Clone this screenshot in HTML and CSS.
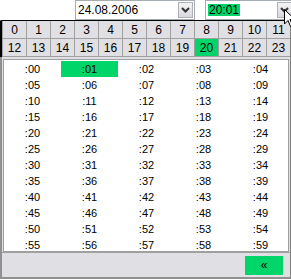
FILE: index.html
```html
<!DOCTYPE html>
<html lang="de">
<head>
    <meta charset="UTF-8">
    <title>Datum und Uhrzeit</title>
    <link rel="stylesheet" href="styles.css">
</head>
<body>
    <div class="top">
        <div class="field date-field">
            <span class="value">24.08.2006</span>
            <span class="drop"><svg width="9" height="6" viewBox="0 0 9 6"><path d="M1 1 L4.5 4.5 L8 1" fill="none" stroke="#333" stroke-width="2"/></svg></span>
        </div>
        <div class="field time-field">
            <span class="value"><span class="sel">20:01</span></span>
            <span class="drop"><svg width="9" height="6" viewBox="0 0 9 6"><path d="M1 1 L4.5 4.5 L8 1" fill="none" stroke="#333" stroke-width="2"/></svg></span>
        </div>
    </div>

    <div class="panel">
        <div class="hours">
            <div class="h">0</div><div class="h">1</div><div class="h">2</div><div class="h">3</div>
            <div class="h">4</div><div class="h">5</div><div class="h">6</div><div class="h">7</div>
            <div class="h">8</div><div class="h">9</div><div class="h">10</div><div class="h">11</div>
            <div class="h">12</div><div class="h">13</div><div class="h">14</div><div class="h">15</div>
            <div class="h">16</div><div class="h">17</div><div class="h">18</div><div class="h">19</div>
            <div class="h active">20</div><div class="h">21</div><div class="h">22</div><div class="h">23</div>
        </div>

        <div class="minutes">
            <div class="m">:00</div><div class="m active">:01</div><div class="m">:02</div><div class="m">:03</div><div class="m">:04</div>
            <div class="m">:05</div><div class="m">:06</div><div class="m">:07</div><div class="m">:08</div><div class="m">:09</div>
            <div class="m">:10</div><div class="m">:11</div><div class="m">:12</div><div class="m">:13</div><div class="m">:14</div>
            <div class="m">:15</div><div class="m">:16</div><div class="m">:17</div><div class="m">:18</div><div class="m">:19</div>
            <div class="m">:20</div><div class="m">:21</div><div class="m">:22</div><div class="m">:23</div><div class="m">:24</div>
            <div class="m">:25</div><div class="m">:26</div><div class="m">:27</div><div class="m">:28</div><div class="m">:29</div>
            <div class="m">:30</div><div class="m">:31</div><div class="m">:32</div><div class="m">:33</div><div class="m">:34</div>
            <div class="m">:35</div><div class="m">:36</div><div class="m">:37</div><div class="m">:38</div><div class="m">:39</div>
            <div class="m">:40</div><div class="m">:41</div><div class="m">:42</div><div class="m">:43</div><div class="m">:44</div>
            <div class="m">:45</div><div class="m">:46</div><div class="m">:47</div><div class="m">:48</div><div class="m">:49</div>
            <div class="m">:50</div><div class="m">:51</div><div class="m">:52</div><div class="m">:53</div><div class="m">:54</div>
            <div class="m">:55</div><div class="m">:56</div><div class="m">:57</div><div class="m">:58</div><div class="m">:59</div>
        </div>

        <div class="footer">
            <div class="back">&laquo;</div>
        </div>
    </div>

    <svg class="cursor" width="12" height="19" viewBox="0 0 12 19">
        <path d="M0.5 0.5 L0.5 15 L4 11.5 L6.5 17.5 L8.5 16.5 L6 10.5 L11 10.5 Z" fill="#fff" stroke="#000" stroke-width="1"/>
    </svg>
</body>
</html>
```

FILE: styles.css
```css
body {
    margin: 0;
    padding: 0;
    font-family: 'Liberation Sans', Arial, sans-serif;
    font-size: 11px;
    color: #000;
    background-color: #ffffff;
    width: 291px;
    height: 280px;
    overflow: hidden;
    position: relative;
}

.top {
    display: flex;
    height: 20px;
    padding-left: 75px;
    gap: 10px;
    overflow: hidden;
}

.field {
    display: flex;
    flex-shrink: 0;
    height: 20px;
    box-sizing: border-box;
    border: 1px solid #a5acb2;
    background-color: #fff;
}

.date-field {
    width: 120px;
}

.time-field {
    width: 89px;
}

.value {
    flex: 1;
    display: flex;
    align-items: center;
    padding-left: 2px;
    font-size: 12px;
}

.sel {
    background-color: #00d56a;
    padding: 0 1px;
    line-height: 12px;
}

.drop {
    width: 15px;
    margin: 1px;
    box-sizing: border-box;
    border: 1px solid #b0b0b8;
    background: linear-gradient(#f4f4f6, #d8d8de);
    display: flex;
    align-items: center;
    justify-content: center;
}

.panel {
    border-top: 1px solid #000;
    border-right: 1px solid #808080;
    border-bottom: 2px solid #909090;
    border-left: 2px solid #909090;
    height: 259px;
    box-sizing: border-box;
    display: flex;
    flex-direction: column;
    background-color: #e0dfe3;
}

.hours {
    display: grid;
    grid-template-columns: repeat(12, 23px);
    grid-auto-rows: 17px;
    margin-left: -2px;
    border-left: 2px solid #000;
    padding-left: 1px;
    padding-bottom: 1px;
    background-color: #a0a0a0;
    gap: 1px;
}

.h {
    background-color: #e0dfe3;
    font-size: 12px;
    display: flex;
    align-items: center;
    justify-content: center;
}

.h.active {
    background-color: #00d56a;
}

.minutes {
    margin: 2px 1px 0 1px;
    background-color: #fff;
    border: 1px solid #a0a0a0;
    padding-top: 1px;
    display: grid;
    grid-template-columns: repeat(5, 57px);
    grid-auto-rows: 16px;
    height: 193px;
    box-sizing: border-box;
}

.m {
    display: flex;
    align-items: center;
    justify-content: center;
}

.m.active {
    background-color: #00d56a;
}

.footer {
    flex: 1;
    display: flex;
    justify-content: flex-end;
    align-items: center;
    padding-right: 7px;
    border-top: 1px solid #a0a0a0;
}

.back {
    width: 38px;
    height: 19px;
    background-color: #00d56a;
    display: flex;
    align-items: center;
    justify-content: center;
    font-size: 12px;
}

.cursor {
    position: absolute;
    left: 284px;
    top: 9px;
}
```
